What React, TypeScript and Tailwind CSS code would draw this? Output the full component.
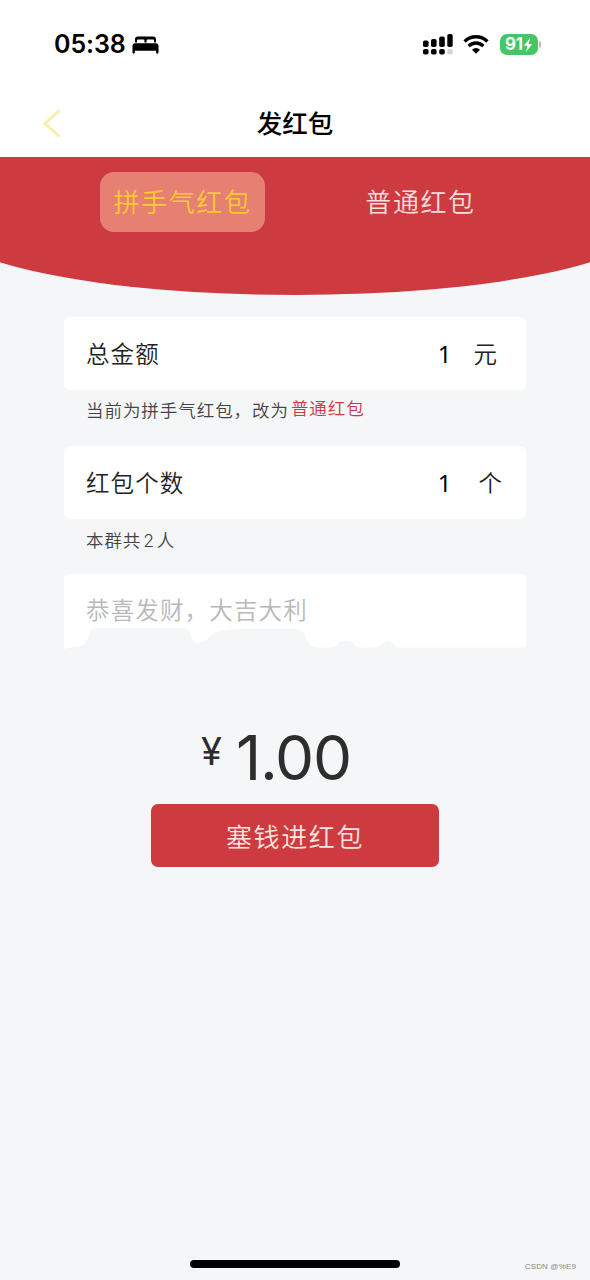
const BedIcon = () => (
	<svg className="w-[27px] h-[18px]" viewBox="0 0 27 18" fill="#000">
		<path d="M3 6.500V3.200C3 1.400 4.100.5 5.700.5h15.600C22.900.5 24 1.400 24 3.200v3.300h-2V4.600c0-.7-.4-1.100-1.100-1.100h-5.200c-.7 0-1.100.4-1.100 1.100v1.900h-2.200V4.600c0-.7-.4-1.100-1.100-1.100H6.100C5.400 3.500 5 3.900 5 4.600v1.900z" />
		<path d="M3.200 7.300h20.600c1.700 0 2.700 1 2.700 2.700v6.500c0 .7-.5 1.200-1.200 1.200s-1.200-.5-1.200-1.200v-1.700H2.900v1.700c0 .7-.5 1.200-1.200 1.200S.5 17.200.5 16.500V10c0-1.700 1-2.700 2.700-2.700z" />
	</svg>
);

const SignalIcon = () => (
	<svg className="w-[30px] h-[22px]" viewBox="0 0 30 22" fill="#000">
		<rect x="0" y="6.500" width="5.600" height="6.500" rx="1.800" />
		<rect x="8" y="5" width="5.600" height="8" rx="1.800" />
		<rect x="16.200" y="2.500" width="5.600" height="10.500" rx="1.800" />
		<rect x="24.300" y="0" width="5.400" height="13" rx="1.800" />
		<rect x="0" y="15" width="5.600" height="5.500" rx="1.800" />
		<rect x="8" y="15" width="5.600" height="5.500" rx="1.800" />
		<rect x="16.200" y="15" width="5.600" height="5.500" rx="1.800" />
		<rect x="24.300" y="15" width="5.400" height="5.500" rx="1.800" fill="#d4d4d4" />
	</svg>
);

const WifiIcon = () => (
	<svg
		className="w-[26px] h-[19px]"
		viewBox="0 0 26 19"
		fill="none"
		stroke="#000"
		strokeWidth="3.4"
	>
		<path d="M1.600 6.500a16.200 16.200 0 0 1 22.800 0" />
		<path d="M5.700 11.100a10.300 10.300 0 0 1 14.600 0" />
		<path d="M13 18.800l-4-4.100a5.700 5.700 0 0 1 8 0z" fill="#000" stroke="none" />
	</svg>
);

const StatusBar = () => (
	<div className="h-[90px] pl-[54px] pr-[49px] pb-px flex items-center justify-between">
		<div className="flex items-center gap-1.5">
			<span className="font-['Inter'] text-[25px] leading-none font-semibold tracking-[-0.1px]">
				05:38
			</span>
			<BedIcon />
		</div>
		<div className="flex items-center">
			<SignalIcon />
			<div className="ml-[10px]">
				<WifiIcon />
			</div>
			<div className="ml-[11px] w-[38px] h-[21px] rounded-[7px] bg-[#45c563] text-white flex items-center justify-center">
				<span className="font-['Inter'] text-[17px] leading-none font-bold tracking-[-0.2px]">
					91
				</span>
				<svg className="w-[10px] h-[14px]" viewBox="0 0 9 14" fill="#fff">
					<path d="M6.500 0L.3 7.800h3.600L2.500 14 8.700 5.900H5.200z" />
				</svg>
			</div>
			<div className="ml-px w-[2px] h-[7px] rounded-r bg-[#bcbcbc]" />
		</div>
	</div>
);

const Header = () => (
	<div className="h-[67px] grid grid-cols-[1fr_auto_1fr] items-center">
		<svg
			className="ml-[42px] w-5 h-[29px]"
			viewBox="0 0 20 29"
			fill="none"
			stroke="#f6efa6"
			strokeWidth="3"
		>
			<path d="M17.500 1.500L3 14.500l14.500 13" />
		</svg>
		<h1 className="pb-1 text-[25.500px] leading-none font-medium text-black">
			发红包
		</h1>
	</div>
);

const Tabs = () => (
	<div className="h-[138px] overflow-hidden">
		<div className="w-[708px] h-full -ml-[59px] pt-[15px] pl-[159px] flex items-start bg-[#cd3a3f] rounded-b-[50%_73px]">
			<button className="w-[165px] h-[60px] pb-0.5 rounded-[14px] bg-[#e68073] text-[#fcc931] text-[26px] leading-none font-[350] tracking-[1.600px]">
				拼手气红包
			</button>
			<button className="ml-[58px] w-[195px] h-[60px] pb-0.5 text-[#fbdedc] text-[26px] leading-none font-[350] tracking-[1.600px]">
				普通红包
			</button>
		</div>
	</div>
);

type FieldProps = {
	label: string;
	value: string;
	unit: string;
	unitClass: string;
};

const Field = ({ label, value, unit, unitClass }: FieldProps) => (
	<div className="h-[73px] pl-[22px] rounded-md bg-white flex items-center text-[23.500px] leading-none font-[350] text-[#222]">
		<span className="flex-1 tracking-[1.100px]">{label}</span>
		<span className="font-['Noto_Sans'] text-[24px] font-normal text-black">
			{value}
		</span>
		<span className={unitClass}>{unit}</span>
	</div>
);

// white panel with an uneven lower edge
const Greeting = () => (
	<div className="relative h-[75px]">
		<svg className="absolute inset-0 w-full h-full" viewBox="0 0 462 75" fill="#fff">
			<path d="M0 6Q0 0 6 0H456Q462 0 462 6V73.500H335Q331 72 329 69Q325 66 320 68Q315 73 309 73.500H296Q291 73 288 68Q281 66 276 68Q273 73 268 73.500H254Q246 73 243 66Q240 55 230 54.500H180Q153 55 147 62Q140 70 132 68.500Q126 66 126 58Q124 54 117 54H32Q26 54 25 61Q23 73 12 73Q5 73 0 75Z" />
		</svg>
		<p className="relative pl-[22px] pt-[23px] text-[23.500px] leading-6 font-[350] tracking-[1.150px] text-[#b8b8b8]">
			恭喜发财，大吉大利
		</p>
	</div>
);

export default function App() {
	return (
		<div className="w-[590px] h-[1280px] flex flex-col overflow-hidden bg-[#f4f6f8] font-['Noto_Sans_CJK_SC',sans-serif]">
			<div className="bg-white">
				<StatusBar />
				<Header />
			</div>
			<Tabs />
			<main className="w-[462px] ml-16 pt-[22px]">
				<Field
					label="总金额"
					value="1"
					unit="元"
					unitClass="ml-[22px] mr-[29px]"
				/>
				<div className="h-14 pl-[22px] pt-1.5 flex text-[17.500px] leading-6 font-[350] tracking-[0.950px] text-[#444]">
					<span className="pt-0.5">当前为拼手气红包，改为</span>
					<a className="ml-0.5 text-[#cd3a3f] tracking-[0.900px]">普通红包</a>
				</div>
				<Field
					label="红包个数"
					value="1"
					unit="个"
					unitClass="ml-[22px] mr-[24px] pl-[5px]"
				/>
				<p className="h-[55px] pl-[22px] pt-[9px] text-[17.500px] leading-6 font-[350] tracking-[0.900px] text-[#444]">
					本群共<span className="mx-[2px] font-['Inter']">2</span>人
				</p>
				<Greeting />
			</main>
			<div className="mt-[74px] ml-[201px] h-[81px] flex items-start font-['Inter'] text-[#2d2d2d]">
				<span className="mt-[8px] text-[38px] leading-[40px]">¥</span>
				<span className="ml-[14px] text-[62px] leading-[70px] tracking-[-1.200px]">
					1.00
				</span>
			</div>
			<button className="ml-[151px] w-[288px] h-[63px] shrink-0 rounded-[7px] bg-[#cd3a3f] text-[#fde6df] text-[26px] leading-none font-[350] tracking-[1.600px]">
				塞钱进红包
			</button>
			<div className="mt-auto h-5 pl-[190px] flex items-start justify-between pr-[14px]">
				<div className="w-[210px] h-2 rounded-full bg-black" />
				<span className="mt-px font-['Liberation_Sans'] text-[8px] leading-3 tracking-[0.150px] text-[#888]">
					CSDN @%E9
				</span>
			</div>
		</div>
	);
}
